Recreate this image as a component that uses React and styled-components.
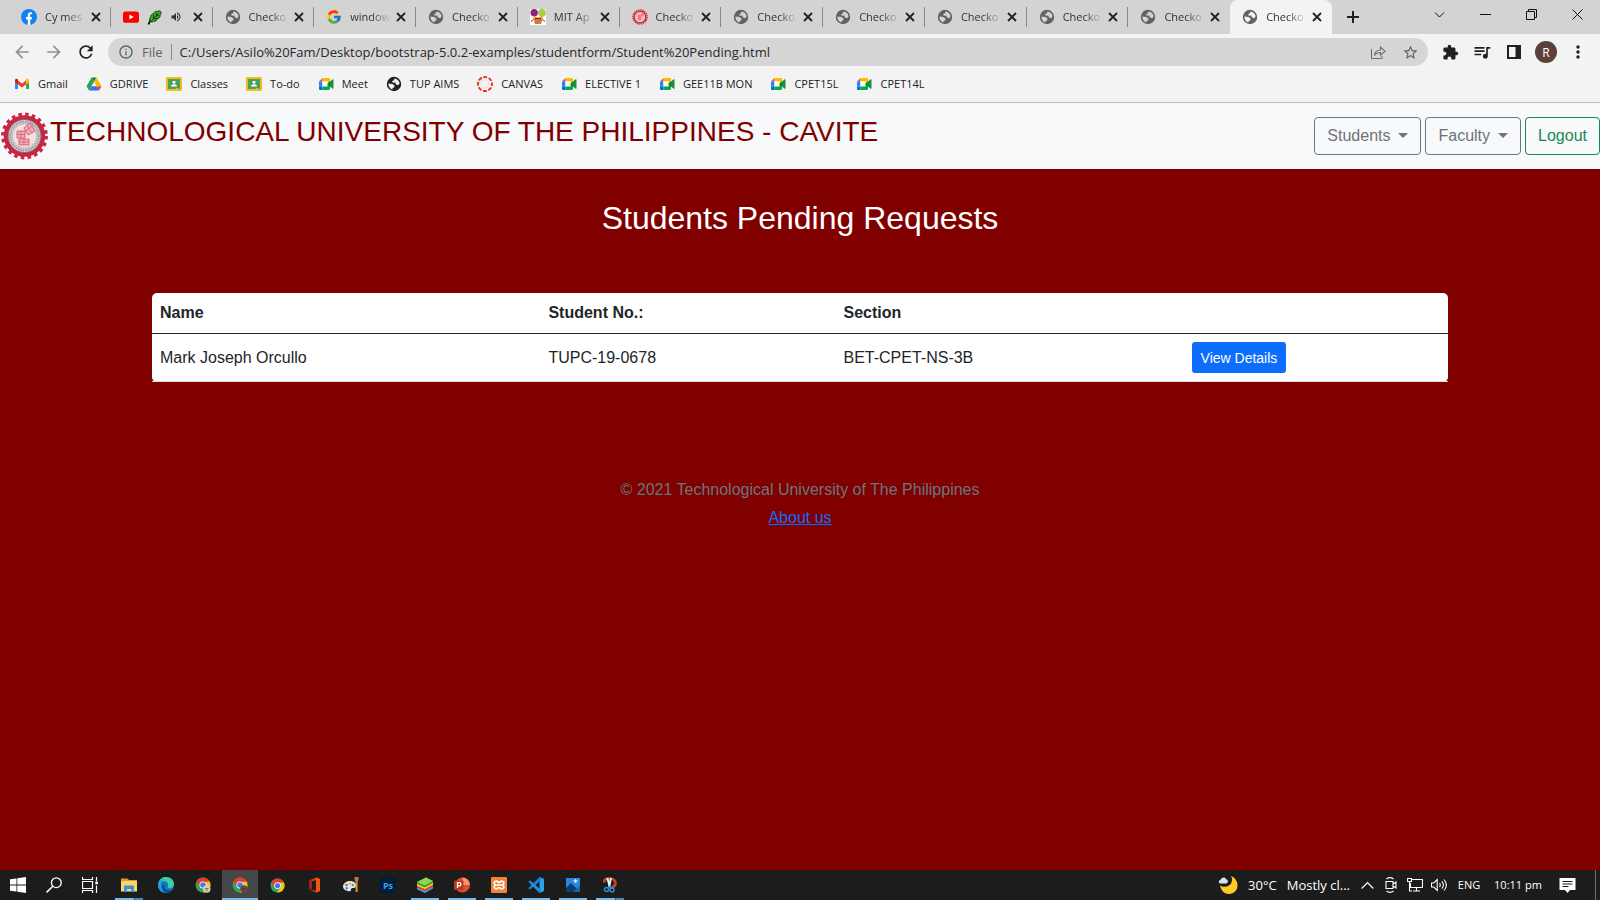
import React from 'react';
import styled, { createGlobalStyle } from 'styled-components';
import {
  MdExtension,
  MdQueueMusic,
  MdStarBorder,
  MdRefresh,
  MdArrowBack,
  MdArrowForward,
  MdInfoOutline,
  MdMoreVert,
  MdVolumeUp,
} from 'react-icons/md';
import { FcGoogle } from 'react-icons/fc';

const uiFont = '"Open Sans", "Noto Sans", sans-serif';
const pageFont = '"Liberation Sans", Arial, sans-serif';

const GlobalStyle = createGlobalStyle`
  *, *::before, *::after { box-sizing: border-box; }
  body { margin: 0; background: #800000; }
  button, input { font: inherit; color: inherit; margin: 0; }
  svg { display: block; flex: none; }
`;

const Screen = styled.div`
  display: flex;
  flex-direction: column;
  min-height: 100vh;
`;

/* ---------- Browser window ---------- */

const BrowserChrome = styled.header`
  font-family: ${uiFont};
  background: #f3f3f3;
  color: #202124;
  border-bottom: 1px solid #bcbec2;
`;

const PlainButton = styled.button`
  display: flex;
  align-items: center;
  justify-content: center;
  padding: 0;
  border: 0;
  background: none;
`;

const TabStrip = styled.div`
  display: flex;
  height: 34px;
  padding-left: 9px;
  background: #d3d3d3;
`;

const TabList = styled.div`
  display: flex;
  flex: 1;
  min-width: 0;
`;

const Tab = styled.div`
  position: relative;
  display: flex;
  align-items: center;
  flex: 1 1 0;
  min-width: 0;
  padding: 0 7px 0 12px;
  border-radius: 8px 8px 0 0;
  background: ${(p) => (p.$active ? '#f3f3f3' : 'transparent')};

  &::after {
    content: '';
    display: ${(p) => (p.$divider ? 'block' : 'none')};
    position: absolute;
    right: 0;
    top: 7px;
    width: 1px;
    height: 20px;
    background: #86888b;
  }
`;

const TabButton = styled(PlainButton)`
  flex: 1;
  min-width: 0;
  gap: 8px;
  justify-content: flex-start;
  font-size: 11px;
  line-height: 16px;
  color: #303236;
`;

const TabTitle = styled.span`
  flex: 1;
  min-width: 0;
  overflow: hidden;
  white-space: nowrap;
  text-align: left;
  mask-image: linear-gradient(to right, #000 50%, transparent 95%);
`;

const TabClose = styled(PlainButton)`
  width: 16px;
  height: 16px;
`;

const TabControls = styled.div`
  display: flex;
  justify-content: space-between;
  flex: none;
  width: 268px;
`;

const NewTab = styled(PlainButton)`
  width: 42px;
`;

const WindowControls = styled.div`
  display: flex;
`;

const WindowButton = styled(PlainButton)`
  width: 46px;
  height: 28px;
`;

const Toolbar = styled.div`
  display: flex;
  align-items: center;
  height: 36px;
  padding: 0 6px;
`;

const ToolButton = styled(PlainButton)`
  width: 32px;
  height: 28px;
  color: ${(p) => (p.$muted ? '#8f9193' : '#202124')};
`;

const Omnibox = styled.form`
  display: flex;
  align-items: center;
  flex: 1;
  min-width: 0;
  height: 28px;
  margin: 0 6px;
  padding: 0 2px 0 10px;
  border-radius: 14px;
  background: #d6d6d6;
  color: #5f6368;
  font-size: 13px;
`;

const Scheme = styled.label`
  display: flex;
  align-items: center;
  gap: 8px;
  padding-right: 8px;
  border-right: 1px solid #8b8d90;
  line-height: 16px;
`;

const UrlInput = styled.input`
  flex: 1;
  min-width: 0;
  padding: 0 8px;
  border: 0;
  outline: 0;
  background: none;
  color: #26282c;
`;

const Avatar = styled.span`
  display: flex;
  align-items: center;
  justify-content: center;
  width: 22px;
  height: 22px;
  border-radius: 50%;
  background: #5d4037;
  color: #fff;
  font-size: 12px;
`;

const BookmarkBar = styled.nav`
  display: flex;
  align-items: center;
  gap: 18px;
  height: 32px;
  padding: 0 14px 4px;
`;

const Bookmark = styled.a`
  display: flex;
  align-items: center;
  gap: 8px;
  font-size: 11px;
  line-height: 16px;
  white-space: nowrap;
  color: #202124;
  text-decoration: none;
`;

/* ---------- Web page ---------- */

const WebPage = styled.div`
  flex: 1;
  background: #800000;
  font-family: ${pageFont};
  font-size: 16px;
  line-height: 24px;
  color: #212529;
`;

const SiteHeader = styled.header`
  display: flex;
  justify-content: space-between;
  height: 66px;
  padding: 8px 0;
  background: #f8f9fa;
`;

const Brand = styled.div`
  display: flex;
  align-items: flex-start;
`;

const BrandName = styled.h1`
  margin: 4px 0 0;
  font-size: 28px;
  font-weight: 400;
  line-height: 34px;
  color: #800000;
`;

const SiteNav = styled.nav`
  display: flex;
  align-items: center;
  gap: 4px;
`;

const OutlineButton = styled.button`
  display: flex;
  align-items: center;
  gap: 8px;
  height: 38px;
  padding: 0 12px;
  border: 1px solid currentColor;
  border-radius: 4px;
  background: none;
  color: ${(p) => (p.$success ? '#198754' : '#6c757d')};
`;

const Caret = styled.span`
  margin-bottom: 2px;
  border-top: 5px solid currentColor;
  border-left: 5px solid transparent;
  border-right: 5px solid transparent;
`;

const Content = styled.main`
  max-width: 1320px;
  margin: 0 auto;
  padding: 30px 12px 0;
`;

const PageTitle = styled.h2`
  margin: 0 0 56px;
  font-size: 32px;
  font-weight: 400;
  line-height: 38px;
  text-align: center;
  color: #fff;
`;

const RequestTable = styled.table`
  width: 100%;
  border-collapse: separate;
  border-spacing: 0;
  border-radius: 5px;
  background: #fff;
`;

const HeadCell = styled.th`
  padding: 8px;
  border-bottom: 1px solid #212529;
  text-align: left;
`;

const Cell = styled.td`
  padding: 8px;
  border-bottom: 1px solid #dee2e6;
`;

const PrimaryButton = styled.button`
  display: block;
  height: 31px;
  padding: 0 9px;
  border: 0;
  border-radius: 3px;
  background: #0d6efd;
  color: #fff;
  font-size: 14px;
`;

const SiteFooter = styled.footer`
  display: flex;
  flex-direction: column;
  align-items: center;
  gap: 4px;
  padding-top: 96px;
  color: #6c757d;
`;

const FooterText = styled.p`
  margin: 0;
`;

const FooterLink = styled.a`
  color: #0d6efd;
`;

/* ---------- Desktop taskbar ---------- */

const Taskbar = styled.footer`
  display: flex;
  justify-content: space-between;
  height: 30px;
  background: #1c1c1c;
  color: #fff;
  font-family: ${uiFont};
`;

const TaskGroup = styled.div`
  display: flex;
  gap: 3px;
`;

const Apps = styled.div`
  display: flex;
  gap: ${(p) => p.$gap || '0'};
`;

const TaskButton = styled(PlainButton)`
  position: relative;
  width: 36px;
  background: ${(p) => (p.$active ? '#464646' : 'transparent')};

  &::after {
    content: '';
    display: ${(p) => (p.$open ? 'block' : 'none')};
    position: absolute;
    bottom: 0;
    left: ${(p) => (p.$active ? '0' : '4px')};
    right: ${(p) => (p.$active ? '0' : '4px')};
    height: 2px;
    background: ${(p) =>
      p.$stacked
        ? 'linear-gradient(to right, #76b9ed 19px, #35546c 19px, #35546c 20px, #5585ab 20px)'
        : '#76b9ed'};
  }
`;

const Tray = styled.div`
  display: flex;
  align-items: center;
  line-height: 16px;
`;

const TrayItem = styled(PlainButton)`
  height: 30px;
  width: ${(p) => p.$width};
  font-size: 11px;
  white-space: nowrap;
`;

const Weather = styled(PlainButton)`
  gap: 10px;
  padding-right: 5px;
  font-size: 13px;
  white-space: nowrap;
`;

const ShowDesktop = styled(PlainButton)`
  width: 5px;
  height: 30px;
  margin-left: 10px;
  border-left: 1px solid #6e6e6e;
`;

/* ---------- Icons ---------- */

const Svg = ({ size = 16, box = 16, children, ...rest }) => (
  <svg width={size} height={size} viewBox={`0 0 ${box} ${box}`} fill="none" aria-hidden="true" {...rest}>
    {children}
  </svg>
);

const GlobeIcon = ({ color = '#5f6368' }) => (
  <Svg>
    <path
      fill={color}
      fillRule="evenodd"
      d="M8 .8a7.200 7.200 0 100 14.400A7.200 7.200 0 008 .8zM8.600 2.500c2.400.2 4.500 2 5 4.700L12.300 9.200 10 8.600 9.300 6.600 6.800 6.800 6.200 5 8 4.200zM2.400 7.600L6.500 8l2 1.600-.3 1.800-1.600.6-.2 1.600C4 12.900 2.300 10.600 2.400 7.600z"
    />
  </Svg>
);

const FacebookIcon = () => (
  <Svg>
    <circle cx="8" cy="8" r="8" fill="#1183f4" />
    <path d="M6.800 16v-5.500H5V8h1.800V6.400C6.800 4.300 8 3.300 9.700 3.300c.7 0 1.400.1 1.400.1v1.900h-.9c-.9 0-1.200.5-1.200 1.100V8h2l-.3 2.500H9.200V16z" fill="#fff" />
  </Svg>
);

const YouTubeIcon = () => (
  <Svg>
    <rect y="2.400" width="16" height="11.400" rx="2.600" fill="#f00" />
    <path d="M6.400 5.600v5l4.300-2.500z" fill="#fff" />
  </Svg>
);

const LeafIcon = () => (
  <Svg size={15} box={16}>
    <path d="M1.500 15.500c1-3 2.500-5.500 5-8.500" stroke="#111" strokeWidth="2" />
    <path d="M4 12.500c-1.500-2-1.500-4 0-5 0-2 1-3.300 3-3.500C7.500 2 9 1 11 1.500 13 .5 14.500 1 14.500 1.500c1 1 .5 3-.5 4 .3 2-1 3.500-3 3.800-.5 2-2 3-4 2.700C6 13 5 13 4 12.500z" fill="#3fae2a" stroke="#123d0c" />
    <path d="M4 12.500L12.500 3.500M7 5v4h4M10 3v3.200h3" stroke="#0f380a" />
  </Svg>
);

const MitIcon = () => (
  <Svg>
    <rect width="16" height="16" fill="#fff" />
    <circle cx="4.200" cy="3.700" r="3.700" fill="#87237c" />
    <circle cx="12" cy="3.700" r="3.900" fill="#a5cf47" />
    <path d="M3.500 6.500l4.500 2 4.500-2 .5 4H3z" fill="#f0a04a" />
    <path d="M3.500 10h9l-1.500 5H5z" fill="#d9743a" />
    <path d="M1 12.500l2.500-2M15 12.500l-2.500-2M5 9.500h6" stroke="#5b3a24" />
  </Svg>
);

const SealIcon = ({ size }) => (
  <Svg size={size} box={50}>
    <circle cx="24.500" cy="25" r="18.500" stroke="#ca2442" strokeWidth="4.500" />
    <circle cx="24.500" cy="25" r="21.600" stroke="#ca2442" strokeWidth="3.600" strokeDasharray="3.500 3.286" />
    <circle cx="24.500" cy="25" r="16.500" fill="#d8d3d4" stroke="#77686b" />
    <circle cx="24.500" cy="25" r="14.300" stroke="#9c9093" strokeWidth="2" strokeDasharray="1.500 1" />
    <circle cx="24.500" cy="25" r="12.200" fill="#f1dfe2" stroke="#a29699" strokeWidth=".6" />
    <path d="M17 20h8v7h-8zM24 17l6-5 5 8-7 4zM19 28h10v6H19z" fill="#f4a9b5" stroke="#cf5168" strokeWidth=".8" />
    <path d="M17 23.500h8M21 20v7M19 31h10M24 28v6M27 14.500l5 7.500M25.500 20l7-5" stroke="#cf5168" strokeWidth=".6" />
  </Svg>
);

const SealFavicon = () => (
  <Svg>
    <circle cx="8" cy="8" r="6" fill="#f1b9c2" stroke="#cf2a47" strokeWidth="1.600" />
    <circle cx="8" cy="8" r="7.200" stroke="#cf2a47" strokeWidth="1.300" strokeDasharray="1.200 1.060" />
    <path d="M6 6h3v5H6zM9 5l2-1 1 2-2 2z" fill="#e47688" />
  </Svg>
);

const GmailIcon = () => (
  <Svg>
    <path d="M1 4.200V13h3V7z" fill="#4285f4" />
    <path d="M15 4.200V13h-3V7z" fill="#34a853" />
    <path d="M4 4.500v4L8 11.500l4-3v-4L8 7.500z" fill="#ea4335" />
    <path d="M1 4.300C1 2.700 2.600 2.400 3.400 3L4 3.500v5L1 6.300z" fill="#c5221f" />
    <path d="M15 4.300c0-1.600-1.600-1.900-2.400-1.300l-.6.5v5l3-2.200z" fill="#fbbc04" />
  </Svg>
);

const DriveIcon = () => (
  <Svg>
    <path d="M5.500 1.500L.5 10.200 3 14.500 8 5.800z" fill="#22a65a" />
    <path d="M5.500 1.500h5L8 5.800z" fill="#16803f" />
    <path d="M10.500 1.500L15.500 10h-4.800L8 5.800z" fill="#ffba00" />
    <path d="M5.500 10.200H10.700l2.500 4.300H3z" fill="#3574e8" />
    <path d="M10.700 10.200h4.800l-2.300 4.300z" fill="#ea4335" />
  </Svg>
);

const ClassroomIcon = () => (
  <Svg>
    <rect y="1" width="16" height="14" rx="1.400" fill="#f6bb1a" />
    <rect x="2" y="3" width="12" height="10" fill="#4a9f5a" />
    <circle cx="8" cy="6.300" r="1.500" fill="#fff" />
    <path d="M5 10.600c0-3.200 6-3.200 6 0z" fill="#fff" />
    <path d="M9.500 12.500h3v.6h-3z" fill="#e8f2e9" />
  </Svg>
);

const MeetIcon = () => (
  <Svg>
    <path d="M4.500 2v3.500H1z" fill="#ea4335" />
    <path d="M1 5.500h3.500v5H1z" fill="#2684fc" />
    <path d="M1 10.500h3.500V14H2.200C1.500 14 1 13.500 1 12.800z" fill="#0066da" />
    <path d="M4.500 2h6.300c.7 0 1.200.5 1.200 1.200V6L9.500 8V5.500h-5z" fill="#ffba00" />
    <path d="M4.500 5.500h5v5h-5z" fill="#fff" />
    <path d="M4.500 10.500h5V8L12 10v2.800c0 .7-.5 1.200-1.200 1.200H4.500z" fill="#00ac47" />
    <path d="M9.300 8L12 5.300v5.400z" fill="#00832d" />
    <path d="M12 5.500L14.600 3.300c.3-.3.9-.1.900.4v8.600c0 .5-.6.7-.9.4L12 10.500z" fill="#1e8e3e" />
  </Svg>
);

const CanvasIcon = () => (
  <Svg>
    <circle cx="8" cy="8" r="7" stroke="#e2382b" strokeWidth="2" strokeDasharray="3.900 1.598" strokeDashoffset="1.900" />
    <circle cx="8" cy="8" r="4" stroke="#e2382b" strokeWidth="1" strokeDasharray="1 2.142" strokeOpacity=".35" />
  </Svg>
);

const CloseIcon = () => (
  <Svg size={10} box={10}>
    <path d="M1 1l8 8M9 1L1 9" stroke="#202124" strokeWidth="1.800" />
  </Svg>
);

const PlusIcon = () => (
  <Svg size={12} box={12}>
    <path d="M6 0v12M0 6h12" stroke="#202124" strokeWidth="2" />
  </Svg>
);

const WindowIcon = ({ d }) => (
  <Svg size={11} box={11}>
    <path d={d} stroke="#111" />
  </Svg>
);

const ShareIcon = () => (
  <Svg>
    <path d="M1.500 5v9.500H12V12M4.500 11.500c.3-3.500 2-5.500 6-5.500V3l4.500 4.200-4.500 4V8.500c-2.500 0-4.500.5-6 3z" stroke="#6b6e72" strokeWidth="1.100" />
  </Svg>
);

const PanelIcon = () => (
  <Svg>
    <path d="M2 2h12v12H2z" stroke="#202124" strokeWidth="2" />
    <path d="M9.500 2H14v12H9.500z" fill="#202124" />
  </Svg>
);

const WindowsIcon = () => (
  <Svg>
    <path d="M0 2.300l6.500-.9v6.200H0zM7.300 1.300L16 0v7.600H7.300zM0 8.400h6.500v6.200L0 13.700zM7.300 8.400H16V16l-8.700-1.300z" fill="#fff" />
  </Svg>
);

const SearchIcon = () => (
  <Svg>
    <circle cx="10.300" cy="5.700" r="4.900" stroke="#fff" strokeWidth="1.300" />
    <path d="M6.800 9.200L.6 15.400" stroke="#fff" strokeWidth="1.500" />
  </Svg>
);

const TaskViewIcon = () => (
  <Svg>
    <path d="M.5 0v2.500h10V0M.5 16v-2.500h10V16M.5 4.500h10v7H.5zM14.500 0v4M14.500 8.500V16" stroke="#fff" strokeWidth="1.200" />
    <path d="M13.300 4.600h2.600v2.600h-2.600z" fill="#fff" />
  </Svg>
);

const ExplorerIcon = () => (
  <Svg>
    <path d="M0 1.500h6.500L8 3h8v3H0z" fill="#d99c1e" />
    <path d="M0 4h16v10.500H0z" fill="#fbd667" />
    <path d="M3 8.500h10V15h-2.800v-3H5.800v3H3z" fill="#3a8fdc" />
  </Svg>
);

const EdgeIcon = () => (
  <Svg>
    <circle cx="8" cy="8" r="8" fill="#1579c8" />
    <path d="M.2 7C1 2.500 4.300 0 8 0c4.500 0 8 3.200 8 7 0 2.500-2 4-4.200 4-2 0-2.700-.9-1.800-2C11 6 8.500 4 5.500 4.300 3 4.500 1 5.500.2 7z" fill="#3ecfa0" />
    <path d="M.2 7C1.500 3.500 4.500 1.500 7.500 2c-3 .5-5 3.500-4.500 6.500.5 4 4 6.500 7 6.800C4 17.300-.7 12.500.2 7z" fill="#1da1dc" />
    <path d="M6.200 9c0 3 3 5.300 8.300 3.500-1.300 2-3.300 3.300-5.500 3.300-3 0-5-2.500-5-5 0-2.300 1.500-4 3.500-4.300-.8.7-1.300 1.500-1.300 2.500z" fill="#0c4a94" />
  </Svg>
);

const ChromeIcon = ({ badge, size = 16 }) => (
  <Svg size={size}>
    <circle cx="8" cy="8" r="7.500" fill="#33a652" />
    <path d="M1.500 4.300a7.500 7.500 0 0113 0L15 5H8L4.700 9.800z" fill="#e33b2e" />
    <path d="M14.600 4.500A7.500 7.500 0 017.600 15.500L11.300 9.500 10.500 5z" fill="#fbc116" />
    <circle cx="8" cy="8" r="3.600" fill="#fff" />
    <circle cx="8" cy="8" r="2.800" fill="#3b7ded" />
    {badge && <circle cx="11.800" cy="12" r="3.700" fill={badge} />}
    {badge && <path d="M10 11.500h3.600M10.500 13.300h2.600" stroke="#3b3330" strokeOpacity=".6" />}
  </Svg>
);

const OfficeIcon = () => (
  <Svg>
    <path d="M10 .5l4 1.500v12l-4 1.500-6.500-2.700L10 13.500V3L6 4.500v6.800L3 12.500v-9z" fill="#d83b01" />
    <path d="M10 .5l4 1.500v12l-4 1.500z" fill="#f0560e" />
    <path d="M3 3.500L6 2v9.200l-3 1.500z" fill="#a51d2b" />
  </Svg>
);

const PaintIcon = () => (
  <Svg>
    <path d="M7 4c4 0 6.500 2.300 6 5-.5 2-2 2-3.500 2s-1.500 1-1.500 2-1 1.500-3 1C2 13.500 0 12 0 9.500 0 6.500 3 4 7 4z" fill="#dbe9f4" />
    <circle cx="3.500" cy="8" r="1.300" fill="#e84a3c" />
    <circle cx="7" cy="6.500" r="1.200" fill="#f1b42f" />
    <circle cx="3.800" cy="11.300" r="1.200" fill="#3d8de0" />
    <circle cx="9.800" cy="8" r="1.200" fill="#4dab4f" />
    <path d="M11.500 0h4v3l-1 2h-2l-1-2z" fill="#b77a45" />
    <path d="M12.600 5h2v10h-2z" fill="#f08c2c" />
  </Svg>
);

const PsBadge = styled.span`
  display: flex;
  align-items: center;
  justify-content: center;
  width: 16px;
  height: 16px;
  border-radius: 2px;
  background: #001e36;
  color: #31a8ff;
  font-size: 9px;
  font-weight: 700;
`;

const StackIcon = () => (
  <Svg>
    <path d="M0 10l8 3.500L16 9v2.500L8 16l-8-3.500z" fill="#3d9ae8" />
    <path d="M0 8.500l8 3.500 8-4.500V9.500L8 14l-8-3.500z" fill="#e8392b" />
    <path d="M0 6.500L8 10l8-4.500v2.300L8 12.200 0 8.800z" fill="#f8d327" />
    <path d="M0 5l9-4.500L16 4v1.800L8 10.300 0 7z" fill="#3b9b32" />
    <path d="M0 5l9-4.500L16 4 8 8.500z" fill="#8cd554" />
  </Svg>
);

const PowerPointIcon = () => (
  <Svg>
    <circle cx="8.500" cy="8" r="7.500" fill="#d35230" />
    <path d="M8.500.5A7.500 7.500 0 0116 8H8.500z" fill="#ff8f6b" />
    <rect y="3.500" width="9.500" height="9.500" rx="1" fill="#b83b1d" />
    <path d="M3.500 11V5.600h1.800a1.500 1.500 0 010 3.200H3.500" stroke="#fff" strokeWidth="1.300" />
  </Svg>
);

const XamppIcon = () => (
  <Svg>
    <rect width="16" height="16" rx="1" fill="#f4813a" />
    <path d="M4.500 4.300c2-.8 2.300 1.200 3.500 1.200s1.500-2 3.500-1.200S13 7 11.500 8c1.500 1 2 2.900 0 3.700S9.200 10.500 8 10.500s-1.500 2-3.500 1.200S3 9 4.500 8C3 7 2.500 5.100 4.500 4.300zM5.500 8h5" stroke="#fff" strokeWidth="1.700" />
  </Svg>
);

const VsCodeIcon = () => (
  <Svg>
    <path d="M11.500 0L16 2v12l-4.500 2z" fill="#2ba4ee" />
    <path d="M11.500 0v4.500L2 12.500.3 11.200z" fill="#1583cf" />
    <path d="M11.500 16v-4.500L2 3.500.3 4.800z" fill="#1e93df" />
    <path d="M12 0v4.500M12 11.500V16" stroke="#1583cf" />
  </Svg>
);

const PhotosIcon = () => (
  <Svg>
    <rect x="1" y="1" width="14" height="14" fill="#2a87df" />
    <path d="M1 15v-4l5-5 9 9z" fill="#103b73" />
    <path d="M7.500 15L15 8.500V15z" fill="#1f5fae" />
    <path d="M10.500 2v4M8.500 4h4" stroke="#cfeaff" strokeWidth="1.300" />
  </Svg>
);

const SnipIcon = () => (
  <Svg>
    <path d="M2.500 5.500C1.500 2.500 4 1.300 7.500 1.500c4 .2 6.500 2 6 5-.3 2.300-2 3.700-4 4.300" stroke="#c7462a" strokeWidth="2.600" />
    <path d="M5.300 1l2.700 9.500M9 1L7 10" stroke="#eef1f3" strokeWidth="2" />
    <path d="M7.500 9v2" stroke="#2f8fe0" strokeWidth="2" />
    <circle cx="4.500" cy="12.500" r="2" stroke="#2f8fe0" strokeWidth="1.400" />
    <circle cx="10" cy="13" r="2" stroke="#2f8fe0" strokeWidth="1.400" />
  </Svg>
);

const MoonIcon = () => (
  <Svg size={20} box={20}>
    <path d="M13 1c2 3.500 1 7.500-2 9.500-2.800 1.800-6.500 1.500-9 0C3 15.500 6.500 19 11 19c5 0 8.500-4 8.500-8.500C19.500 6 17 2.500 13 1z" fill="#ffc928" />
    <path d="M2.500 8.500C0 8 .5 5 2.500 5c.5-3 5-3.500 5.500-.8 2.500 0 2.500 4 0 4.300z" fill="#cfe6f7" />
  </Svg>
);

const ChevronUpIcon = () => (
  <Svg size={13} box={13}>
    <path d="M.7 9.500l5.800-5.800 5.800 5.800" stroke="#fff" strokeWidth="1.200" />
  </Svg>
);

const MeetNowIcon = () => (
  <Svg>
    <path d="M3 4.500h7v7H3zM10 7l3-2v6l-3-2M3.500 2c2-1.500 5-1.500 7 0M3.500 14c2 1.500 5 1.500 7 0" stroke="#fff" strokeWidth="1.100" />
  </Svg>
);

const NetworkIcon = () => (
  <Svg>
    <path d="M5 2.500h10.500v8H3.500V6M9.500 10.500v3M6 14h7M.5 1.500h4v3h-4zM2.500 4.500V14H5" stroke="#fff" strokeWidth="1.100" />
  </Svg>
);

const SpeakerIcon = () => (
  <Svg>
    <path d="M.5 6h2.300l3.400-3.500v11L2.800 10H.5zM8.500 6c1 1.300 1 2.700 0 4M10.800 4.300c2 2.300 2 5.100 0 7.400M13 2.500c3 3.500 3 7.500 0 11" stroke="#fff" strokeWidth="1.100" />
  </Svg>
);

const NotificationIcon = () => (
  <Svg size={17} box={17}>
    <path d="M.5 1h16v12h-5.500l-2.500 3-2.500-3H.5z" fill="#fff" />
    <path d="M3.500 4.500h10M3.500 7h10M3.500 9.500h6" stroke="#1c1c1c" />
  </Svg>
);

/* ---------- Data ---------- */

const tabs = [
  { title: 'Cy mes', icon: <FacebookIcon /> },
  { label: 'Video', icon: <YouTubeIcon />, playing: true },
  { title: 'Checko', icon: <GlobeIcon /> },
  { title: 'window', icon: <FcGoogle size={16} /> },
  { title: 'Checko', icon: <GlobeIcon /> },
  { title: 'MIT Ap', icon: <MitIcon /> },
  { title: 'Checko', icon: <SealFavicon /> },
  { title: 'Checko', icon: <GlobeIcon /> },
  { title: 'Checko', icon: <GlobeIcon /> },
  { title: 'Checko', icon: <GlobeIcon /> },
  { title: 'Checko', icon: <GlobeIcon /> },
  { title: 'Checko', icon: <GlobeIcon /> },
  { title: 'Checko', icon: <GlobeIcon />, active: true },
];

const bookmarks = [
  ['Gmail', <GmailIcon />],
  ['GDRIVE', <DriveIcon />],
  ['Classes', <ClassroomIcon />],
  ['To-do', <ClassroomIcon />],
  ['Meet', <MeetIcon />],
  ['TUP AIMS', <GlobeIcon color="#202124" />],
  ['CANVAS', <CanvasIcon />],
  ['ELECTIVE 1', <MeetIcon />],
  ['GEE11B MON', <MeetIcon />],
  ['CPET15L', <MeetIcon />],
  ['CPET14L', <MeetIcon />],
];

const systemButtons = [
  ['Start', <WindowsIcon />],
  ['Search', <SearchIcon />],
  ['Task View', <TaskViewIcon />],
];

const apps = [
  { name: 'File Explorer', icon: <ExplorerIcon />, open: true, stacked: true },
  { name: 'Edge', icon: <EdgeIcon /> },
  { name: 'Chrome profile 1', icon: <ChromeIcon badge="#d8d0bd" /> },
  { name: 'Chrome profile 2', icon: <ChromeIcon badge="#6b4a42" />, open: true, active: true },
  { name: 'Chrome', icon: <ChromeIcon size={15} /> },
  { name: 'Office', icon: <OfficeIcon /> },
  { name: 'Paint', icon: <PaintIcon /> },
  { name: 'Photoshop', icon: <PsBadge>Ps</PsBadge> },
  { name: 'BlueStacks', icon: <StackIcon />, open: true },
  { name: 'PowerPoint', icon: <PowerPointIcon />, open: true },
  { name: 'XAMPP', icon: <XamppIcon />, open: true },
  { name: 'VS Code', icon: <VsCodeIcon />, open: true },
  { name: 'Photos', icon: <PhotosIcon />, open: true },
  { name: 'Snipping Tool', icon: <SnipIcon />, open: true, stacked: true },
];

const windowButtons = [
  ['Search tabs', 'M1 3.500l4.500 4.500L10 3.500'],
  ['Minimize', 'M0 5.500h11'],
  ['Restore', 'M.5 2.500h8v8h-8zM2.500 2.500v-2h8v8h-2'],
  ['Close', 'M.5.5l10 10M10.500.5l-10 10'],
];

const requests = [
  { name: 'Mark Joseph Orcullo', number: 'TUPC-19-0678', section: 'BET-CPET-NS-3B' },
];

export default function App() {
  return (
    <Screen>
      <GlobalStyle />
      <BrowserChrome>
        <TabStrip>
          <TabList>
            {tabs.map((tab, i) => (
              <Tab key={i} $active={tab.active} $divider={i < tabs.length - 2}>
                <TabButton type="button" aria-label={tab.label}>
                  {tab.icon}
                  {tab.playing ? (
                    <>
                      <LeafIcon />
                      <MdVolumeUp size={12} />
                    </>
                  ) : (
                    <TabTitle>{tab.title}</TabTitle>
                  )}
                </TabButton>
                <TabClose type="button" aria-label="Close tab">
                  <CloseIcon />
                </TabClose>
              </Tab>
            ))}
          </TabList>
          <TabControls>
            <NewTab type="button" aria-label="New tab">
              <PlusIcon />
            </NewTab>
            <WindowControls>
              {windowButtons.map(([name, d]) => (
                <WindowButton key={name} type="button" aria-label={name}>
                  <WindowIcon d={d} />
                </WindowButton>
              ))}
            </WindowControls>
          </TabControls>
        </TabStrip>

        <Toolbar>
          <ToolButton type="button" aria-label="Back" $muted>
            <MdArrowBack size={20} />
          </ToolButton>
          <ToolButton type="button" aria-label="Forward" $muted>
            <MdArrowForward size={20} />
          </ToolButton>
          <ToolButton type="button" aria-label="Reload">
            <MdRefresh size={20} />
          </ToolButton>
          <Omnibox>
            <Scheme htmlFor="url">
              <MdInfoOutline size={16} />
              File
            </Scheme>
            <UrlInput
              id="url"
              readOnly
              value="C:/Users/Asilo%20Fam/Desktop/bootstrap-5.0.2-examples/studentform/Student%20Pending.html"
            />
            <ToolButton type="button" aria-label="Share">
              <ShareIcon />
            </ToolButton>
            <ToolButton type="button" aria-label="Bookmark this page">
              <MdStarBorder size={17} color="#5f6368" />
            </ToolButton>
          </Omnibox>
          <ToolButton type="button" aria-label="Extensions">
            <MdExtension size={17} />
          </ToolButton>
          <ToolButton type="button" aria-label="Media">
            <MdQueueMusic size={20} />
          </ToolButton>
          <ToolButton type="button" aria-label="Side panel">
            <PanelIcon />
          </ToolButton>
          <ToolButton type="button" aria-label="Profile">
            <Avatar>R</Avatar>
          </ToolButton>
          <ToolButton type="button" aria-label="Menu">
            <MdMoreVert size={20} />
          </ToolButton>
        </Toolbar>

        <BookmarkBar>
          {bookmarks.map(([name, icon]) => (
            <Bookmark key={name} href="#">
              {icon}
              {name}
            </Bookmark>
          ))}
        </BookmarkBar>
      </BrowserChrome>

      <WebPage>
        <SiteHeader>
          <Brand>
            <SealIcon size={50} />
            <BrandName>TECHNOLOGICAL UNIVERSITY OF THE PHILIPPINES - CAVITE</BrandName>
          </Brand>
          <SiteNav>
            <OutlineButton type="button">
              Students <Caret />
            </OutlineButton>
            <OutlineButton type="button">
              Faculty <Caret />
            </OutlineButton>
            <OutlineButton type="button" $success>
              Logout
            </OutlineButton>
          </SiteNav>
        </SiteHeader>

        <Content>
          <PageTitle>Students Pending Requests</PageTitle>
          <RequestTable>
            <thead>
              <tr>
                <HeadCell>Name</HeadCell>
                <HeadCell>Student No.:</HeadCell>
                <HeadCell>Section</HeadCell>
                <HeadCell aria-label="Actions" />
              </tr>
            </thead>
            <tbody>
              {requests.map((r) => (
                <tr key={r.number}>
                  <Cell>{r.name}</Cell>
                  <Cell>{r.number}</Cell>
                  <Cell>{r.section}</Cell>
                  <Cell>
                    <PrimaryButton type="button">View Details</PrimaryButton>
                  </Cell>
                </tr>
              ))}
            </tbody>
          </RequestTable>
          <SiteFooter>
            <FooterText>© 2021 Technological University of The Philippines</FooterText>
            <FooterLink href="#">About us</FooterLink>
          </SiteFooter>
        </Content>
      </WebPage>

      <Taskbar>
        <TaskGroup>
          <Apps>
            {systemButtons.map(([name, icon]) => (
              <TaskButton key={name} type="button" aria-label={name}>
                {icon}
              </TaskButton>
            ))}
          </Apps>
          <Apps $gap="1px">
            {apps.map((app) => (
              <TaskButton
                key={app.name}
                type="button"
                aria-label={app.name}
                $open={app.open}
                $active={app.active}
                $stacked={app.stacked}
              >
                {app.icon}
              </TaskButton>
            ))}
          </Apps>
        </TaskGroup>
        <Tray>
          <Weather type="button">
            <MoonIcon />
            <span>30°C</span>
            <span>Mostly cl...</span>
          </Weather>
          <TrayItem type="button" aria-label="Show hidden icons" $width="24px">
            <ChevronUpIcon />
          </TrayItem>
          <TrayItem type="button" aria-label="Meet now" $width="24px">
            <MeetNowIcon />
          </TrayItem>
          <TrayItem type="button" aria-label="Network" $width="24px">
            <NetworkIcon />
          </TrayItem>
          <TrayItem type="button" aria-label="Volume" $width="24px">
            <SpeakerIcon />
          </TrayItem>
          <TrayItem type="button" $width="36px">
            ENG
          </TrayItem>
          <TrayItem type="button" $width="62px">
            10:11 pm
          </TrayItem>
          <TrayItem type="button" aria-label="Notifications" $width="36px">
            <NotificationIcon />
          </TrayItem>
          <ShowDesktop type="button" aria-label="Show desktop" />
        </Tray>
      </Taskbar>
    </Screen>
  );
}
